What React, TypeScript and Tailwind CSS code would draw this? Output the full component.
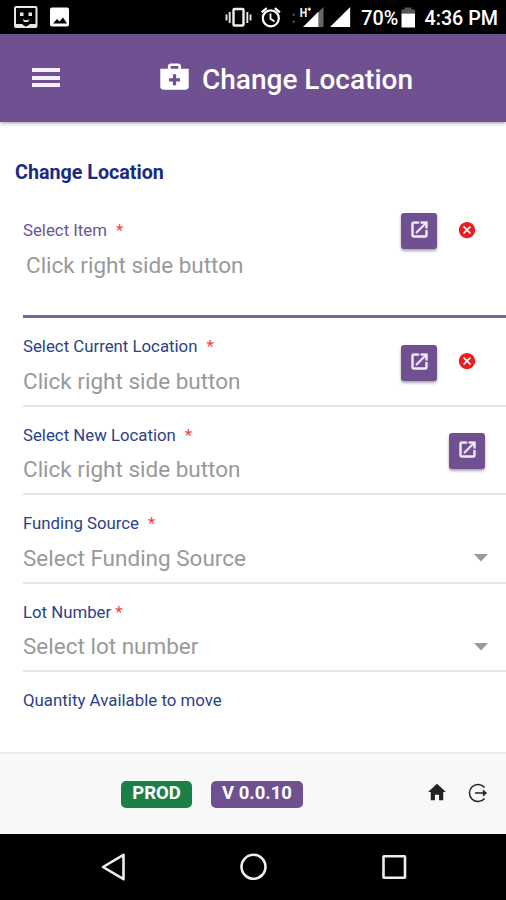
import { ReactNode } from "react";
import {
  IoMdCloseCircle,
  IoMdHome,
  IoMdMedkit,
  IoMdOpen,
} from "react-icons/io";

interface FieldProps {
  label: string;
  placeholder: string;
  active?: boolean;
  tightStar?: boolean;
  children?: ReactNode;
}

const StatusBar = () => (
  <div className="flex h-[34px] shrink-0 items-center bg-black text-white">
    <svg width="506" height="34" viewBox="0 0 506 34" fill="none">
      {/* notifications */}
      <rect x="15" y="7" width="21.5" height="20" rx="1" stroke="#e8e8e8" strokeWidth="2" />
      <path d="M16 24h6l4 3 4-3h6v3.500H16z" fill="#e8e8e8" />
      <path d="M23.200 23.500h5.200l-2.600 3.500z" fill="#000" />
      <path d="M20 12.500h3.500v3.500H20zM28.500 12.500H32v3.500h-3.500z" fill="#e8e8e8" />
      <path d="M22.500 19q3.500 2.500 7 0l-1.500 3h-4z" fill="#e8e8e8" />
      <rect x="50" y="7.500" width="19" height="19" rx="2" fill="#fff" />
      <path d="M53 23.500l4-4.500 2.500 2.500 3.500-4 4 6z" fill="#000" />

      {/* vibrate and alarm */}
      <rect x="233.500" y="9" width="10" height="16.500" rx="1" stroke="#eee" strokeWidth="2.400" />
      <path d="M229.700 12v11M247.300 12v11M226.500 14.500v6M250.500 14.500v6" stroke="#e6e6e6" strokeWidth="1.900" />
      <circle cx="270.800" cy="18.300" r="8" stroke="#fff" strokeWidth="2.200" />
      <path d="M270.500 13.500v5.300l4 2.600" stroke="#fff" strokeWidth="1.800" />
      <path d="M261.700 12.300l5-4.200M279.900 12.300l-5-4.200" stroke="#fff" strokeWidth="2.200" />

      {/* signal */}
      <path d="M292.500 13.500h2.500v2.500h-2.500zM292.500 20.500h2.500v2.500h-2.500z" fill="#444" />
      <path d="M323.500 7v20h-5V12z" fill="#666" />
      <path d="M303 27L318.500 11.500V27z" fill="#fff" />
      <text x="299.800" y="16.600" fill="#fff" fontFamily="Roboto, sans-serif" fontWeight="700" fontSize="12" textLength="7.500" lengthAdjust="spacingAndGlyphs">H</text>
      <path d="M307.500 9.200h3.600M309.300 7.400v3.600" stroke="#fff" strokeWidth="1.300" />
      <path d="M330 27L350.200 7v20z" fill="#fff" />

      {/* battery */}
      <text x="361.300" y="25" fill="#fff" fontFamily="Roboto, sans-serif" fontWeight="500" fontSize="20" textLength="37" lengthAdjust="spacingAndGlyphs">70%</text>
      <path d="M404.500 7.500h7v2h3.500v4h-13.500v-4h3z" fill="#555" />
      <path d="M401.500 13.500H415v14h-13.500z" fill="#fff" />
      <text x="424.500" y="25" fill="#fff" fontFamily="Roboto, sans-serif" fontWeight="500" fontSize="20" textLength="73.500" lengthAdjust="spacingAndGlyphs">4:36 PM</text>
    </svg>
  </div>
);

const OpenButton = () => (
  <button className="mt-[3px] flex h-9 w-9 items-center justify-center rounded-[3px] bg-[#6f5091] pb-[3px] pl-px text-[#f3edf8] shadow-[0_2px_3px_rgba(0,0,0,0.35)]">
    <IoMdOpen size={21} stroke="currentColor" strokeWidth={14} />
  </button>
);

const ClearButton = () => (
  <button className="flex w-[17px] items-center justify-center text-[#ec1c24]">
    <IoMdCloseCircle size={20} className="shrink-0" />
  </button>
);

const Caret = () => (
  <svg width="14" height="8" viewBox="0 0 14 8" className="mt-[40px]">
    <path d="M0 0h14L7 7.500z" fill="#999" />
  </svg>
);

const LogOutIcon = () => (
  <svg width="20" height="20" viewBox="0 0 20 20" fill="none" stroke="#222" strokeWidth="1.500" className="mb-[3px] ml-[20px]">
    <path d="M16.600 4.400a8.600 8.600 0 1 0 0 11.200" />
    <path d="M7 10h11" />
    <path d="M15.300 7l3.200 3-3.200 3z" fill="#222" strokeWidth="0.800" />
  </svg>
);

const Field = ({ label, placeholder, active, tightStar, children }: FieldProps) => (
  <div
    className={`ml-[23px] flex shrink-0 justify-between ${
      active
        ? "h-[131px] items-start border-b-[3px] border-[#75649a]"
        : "h-[88.6px] items-center border-b-2 border-[#e6e6e6]"
    }`}
  >
    <div className={`flex flex-col self-start ${active ? "pt-[32px]" : "pt-[17px]"}`}>
      <label
        className={`text-[16.8px] leading-[22px] whitespace-pre ${
          active ? "text-[#6b5495]" : "text-[#2c3f88]"
        }`}
      >
        {label}
        <span className={`text-[#f44336] ${tightStar ? "ml-1" : "ml-[9px]"}`}>*</span>
      </label>
      <span
        className={`mt-[8.5px] text-[22.5px] leading-[30px] whitespace-nowrap text-[#999] ${
          active ? "pl-[3px]" : ""
        }`}
      >
        {placeholder}
      </span>
    </div>
    {children}
  </div>
);

export default function App() {
  return (
    <div className="flex h-[900px] w-[506px] flex-col overflow-hidden bg-white font-['Roboto',sans-serif]">
      <StatusBar />

      <header className="z-10 flex h-[87.500px] shrink-0 items-center bg-[#6f5091] text-white shadow-[0_1px_4px_rgba(0,0,0,0.4)]">
        <button className="ml-8 flex w-7 flex-col gap-[3.500px]">
          <span className="h-1 w-full bg-[#f5f0fa]" />
          <span className="h-1 w-full bg-[#f5f0fa]" />
          <span className="h-1 w-full bg-[#f5f0fa]" />
        </button>
        <IoMdMedkit size={35} className="mb-[2px] ml-[97px]" />
        <h1 className="ml-[10px] pt-1 text-[28px] font-medium whitespace-nowrap">Change Location</h1>
      </header>

      <main className="flex min-h-0 flex-1 flex-col overflow-hidden">
        <h2 className="h-[65.500px] shrink-0 pt-[37px] pl-[15px] text-[19.700px] leading-7 font-bold text-[#1b2c80]">
          Change Location
        </h2>
        <Field label="Select Item" placeholder="Click right side button" active>
          <div className="flex items-center gap-[21px] pt-[23px] pr-[31px]">
            <OpenButton />
            <ClearButton />
          </div>
        </Field>
        <Field label="Select Current Location" placeholder="Click right side button">
          <div className="flex items-center gap-[21px] pr-[31px]">
            <OpenButton />
            <ClearButton />
          </div>
        </Field>
        <Field label="Select New Location" placeholder="Click right side button">
          <div className="pr-[21px]">
            <OpenButton />
          </div>
        </Field>
        <Field label="Funding Source" placeholder="Select Funding Source">
          <div className="pr-[18px]">
            <Caret />
          </div>
        </Field>
        <Field label="Lot Number" placeholder="Select lot number" tightStar>
          <div className="pr-[18px]">
            <Caret />
          </div>
        </Field>
        <div className="ml-[23px] pt-[17px] text-[16.850px] leading-[22px] text-[#2c3f88]">
          Quantity Available to move
        </div>
      </main>

      <footer className="flex h-[82px] shrink-0 items-center border-t-2 border-[#ececec] bg-[#f8f8f8] text-[#222]">
        <span className="ml-[121px] flex h-[27px] w-[71px] items-center justify-center rounded-[5px] bg-[#1b8048] text-[18.500px] font-bold text-white">
          PROD
        </span>
        <span className="ml-[19px] flex h-[27px] w-[92px] items-center justify-center rounded-[5px] bg-[#6f5091] text-[18.500px] font-bold whitespace-nowrap text-white">
          V 0.0.10
        </span>
        <IoMdHome size={22} className="mb-[4px] ml-[123px]" />
        <LogOutIcon />
      </footer>

      <nav className="flex h-[66px] shrink-0 items-center bg-black">
        <svg width="506" height="66" viewBox="0 0 506 66" fill="none" stroke="#eee" strokeWidth="2.600">
          <path d="M123.500 20.800v24.400L103 33z" strokeLinejoin="round" />
          <circle cx="253.500" cy="32.800" r="12" />
          <rect x="383.500" y="22.200" width="21.500" height="21.500" rx="0.500" />
        </svg>
      </nav>
    </div>
  );
}
